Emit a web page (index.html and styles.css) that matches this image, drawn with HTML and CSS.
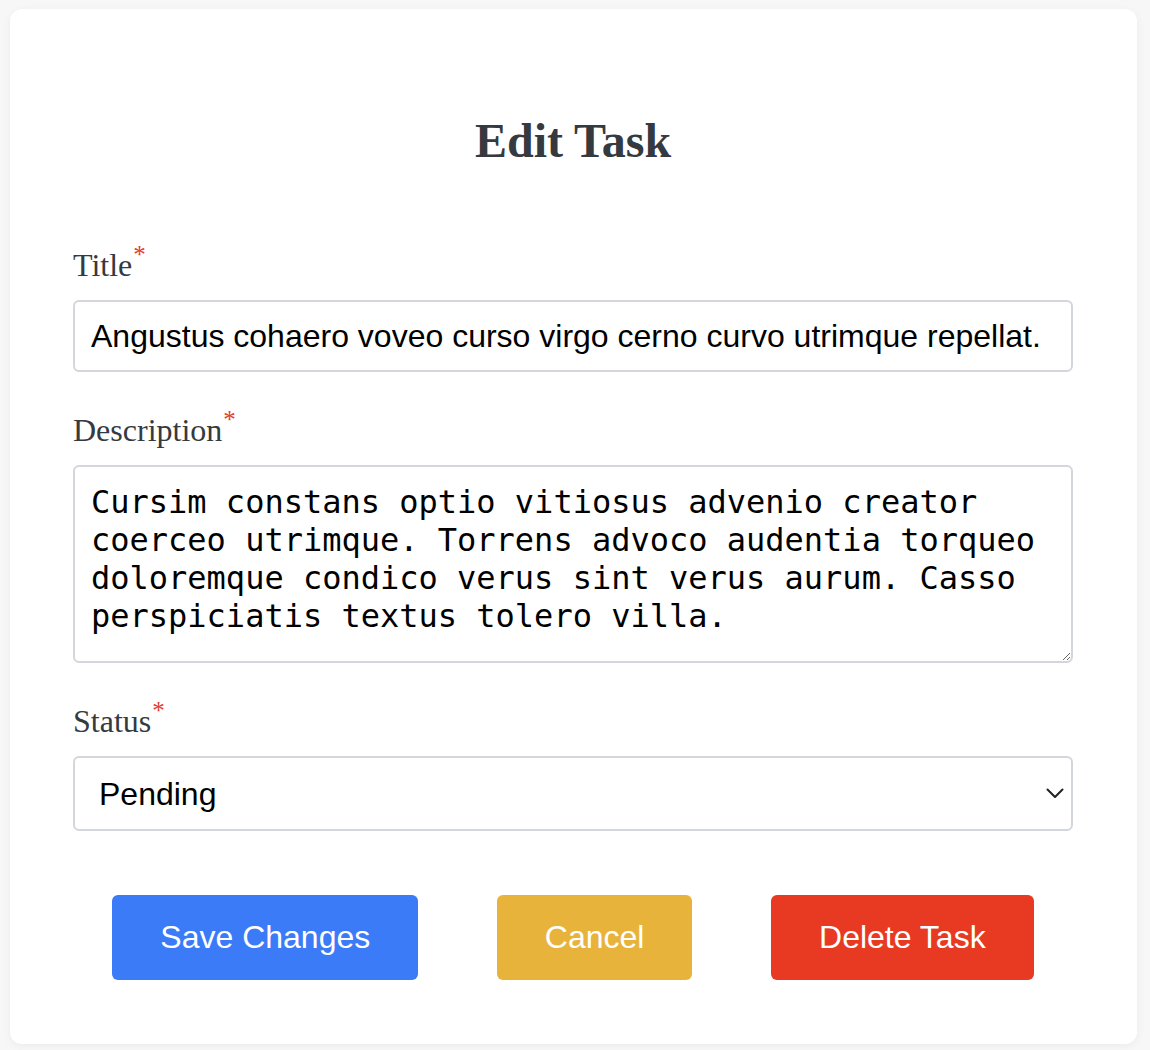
FILE: index.html
```html
<!DOCTYPE html>
<html lang="en">
<head>
<meta charset="utf-8">
<title>Edit Task</title>
<link rel="stylesheet" href="styles.css">
</head>
<body>
<div class="card">
  <h1 class="heading">Edit Task</h1>
  <form class="form">
    <div class="group">
      <label class="label" for="title">Title<span class="req">*</span></label>
      <input class="field" id="title" type="text" value="Angustus cohaero voveo curso virgo cerno curvo utrimque repellat.">
    </div>
    <div class="group">
      <label class="label" for="desc">Description<span class="req">*</span></label>
      <textarea class="area" id="desc">Cursim constans optio vitiosus advenio creator coerceo utrimque. Torrens advoco audentia torqueo doloremque condico verus sint verus aurum. Casso perspiciatis textus tolero villa.</textarea>
    </div>
    <div class="group">
      <label class="label" for="status">Status<span class="req">*</span></label>
      <div class="select-wrap">
        <select class="select" id="status">
          <option selected>Pending</option>
          <option>In Progress</option>
          <option>Completed</option>
        </select>
        <svg class="chevron" width="18" height="11" viewBox="0 0 18 11"><path d="M1.5 1.5 L9 9 L16.5 1.5" fill="none" stroke="#222" stroke-width="2" stroke-linecap="round" stroke-linejoin="round"/></svg>
      </div>
    </div>
    <div class="actions">
      <button type="button" class="btn btn-save">Save Changes</button>
      <button type="button" class="btn btn-cancel">Cancel</button>
      <button type="button" class="btn btn-delete">Delete Task</button>
    </div>
  </form>
</div>
</body>
</html>
```
FILE: styles.css
```css
html, body {
  margin: 0;
  padding: 0;
}
body {
  background: #f7f7f7;
  padding: 9px 13px 7px 10px;
  font-family: "Liberation Serif", "Times New Roman", serif;
}
.card {
  box-sizing: border-box;
  width: 1127px;
  background: #ffffff;
  border-radius: 12px;
  box-shadow: 0 2px 10px rgba(0, 0, 0, 0.05);
  padding: 64px 64px 64px 63px;
}
.heading {
  margin: 40px 0 79px;
  text-align: center;
  font-size: 48px;
  font-weight: bold;
  color: #343a40;
  line-height: normal;
}
.form {
  display: flex;
  flex-direction: column;
  gap: 40px;
}
.group {
  display: flex;
  flex-direction: column;
  gap: 16px;
}
.label {
  font-size: 32px;
  color: #343a40;
  line-height: normal;
}
.req {
  color: #e53b2c;
  font-family: "Liberation Serif", "Times New Roman", serif;
  font-size: 25px;
  vertical-align: 13px;
  line-height: 0;
  margin-left: 1px;
}
.field, .area, .select {
  box-sizing: border-box;
  width: 100%;
  border: 2px solid #d3d6da;
  border-radius: 6px;
  background: #fff;
  color: #000;
  margin: 0;
  outline: none;
}
.field {
  height: 72px;
  padding: 0 16px;
  font-family: "Liberation Sans", Arial, sans-serif;
  font-size: 32px;
}
.area {
  height: 198px;
  padding: 16px 16px;
  font-family: "DejaVu Sans Mono", "Liberation Mono", monospace;
  font-size: 32px;
  line-height: 38px;
  resize: vertical;
  display: block;
}
.select-wrap {
  position: relative;
}
.select {
  display: block;
  height: 75px;
  padding: 0 24px;
  font-family: "Liberation Sans", Arial, sans-serif;
  font-size: 32px;
  appearance: none;
  -webkit-appearance: none;
}
.chevron {
  position: absolute;
  right: 9px;
  top: 32px;
  pointer-events: none;
}
.actions {
  display: flex;
  justify-content: space-around;
  margin-top: 24px;
}
.btn {
  border: none;
  border-radius: 6px;
  padding: 0 48px;
  height: 85px;
  font-family: "Liberation Sans", Arial, sans-serif;
  font-size: 32px;
  color: #fff;
  cursor: pointer;
}
.btn-save { background: #3b7bf7; }
.btn-cancel { background: #e8b33a; }
.btn-delete { background: #e83a23; }
```
